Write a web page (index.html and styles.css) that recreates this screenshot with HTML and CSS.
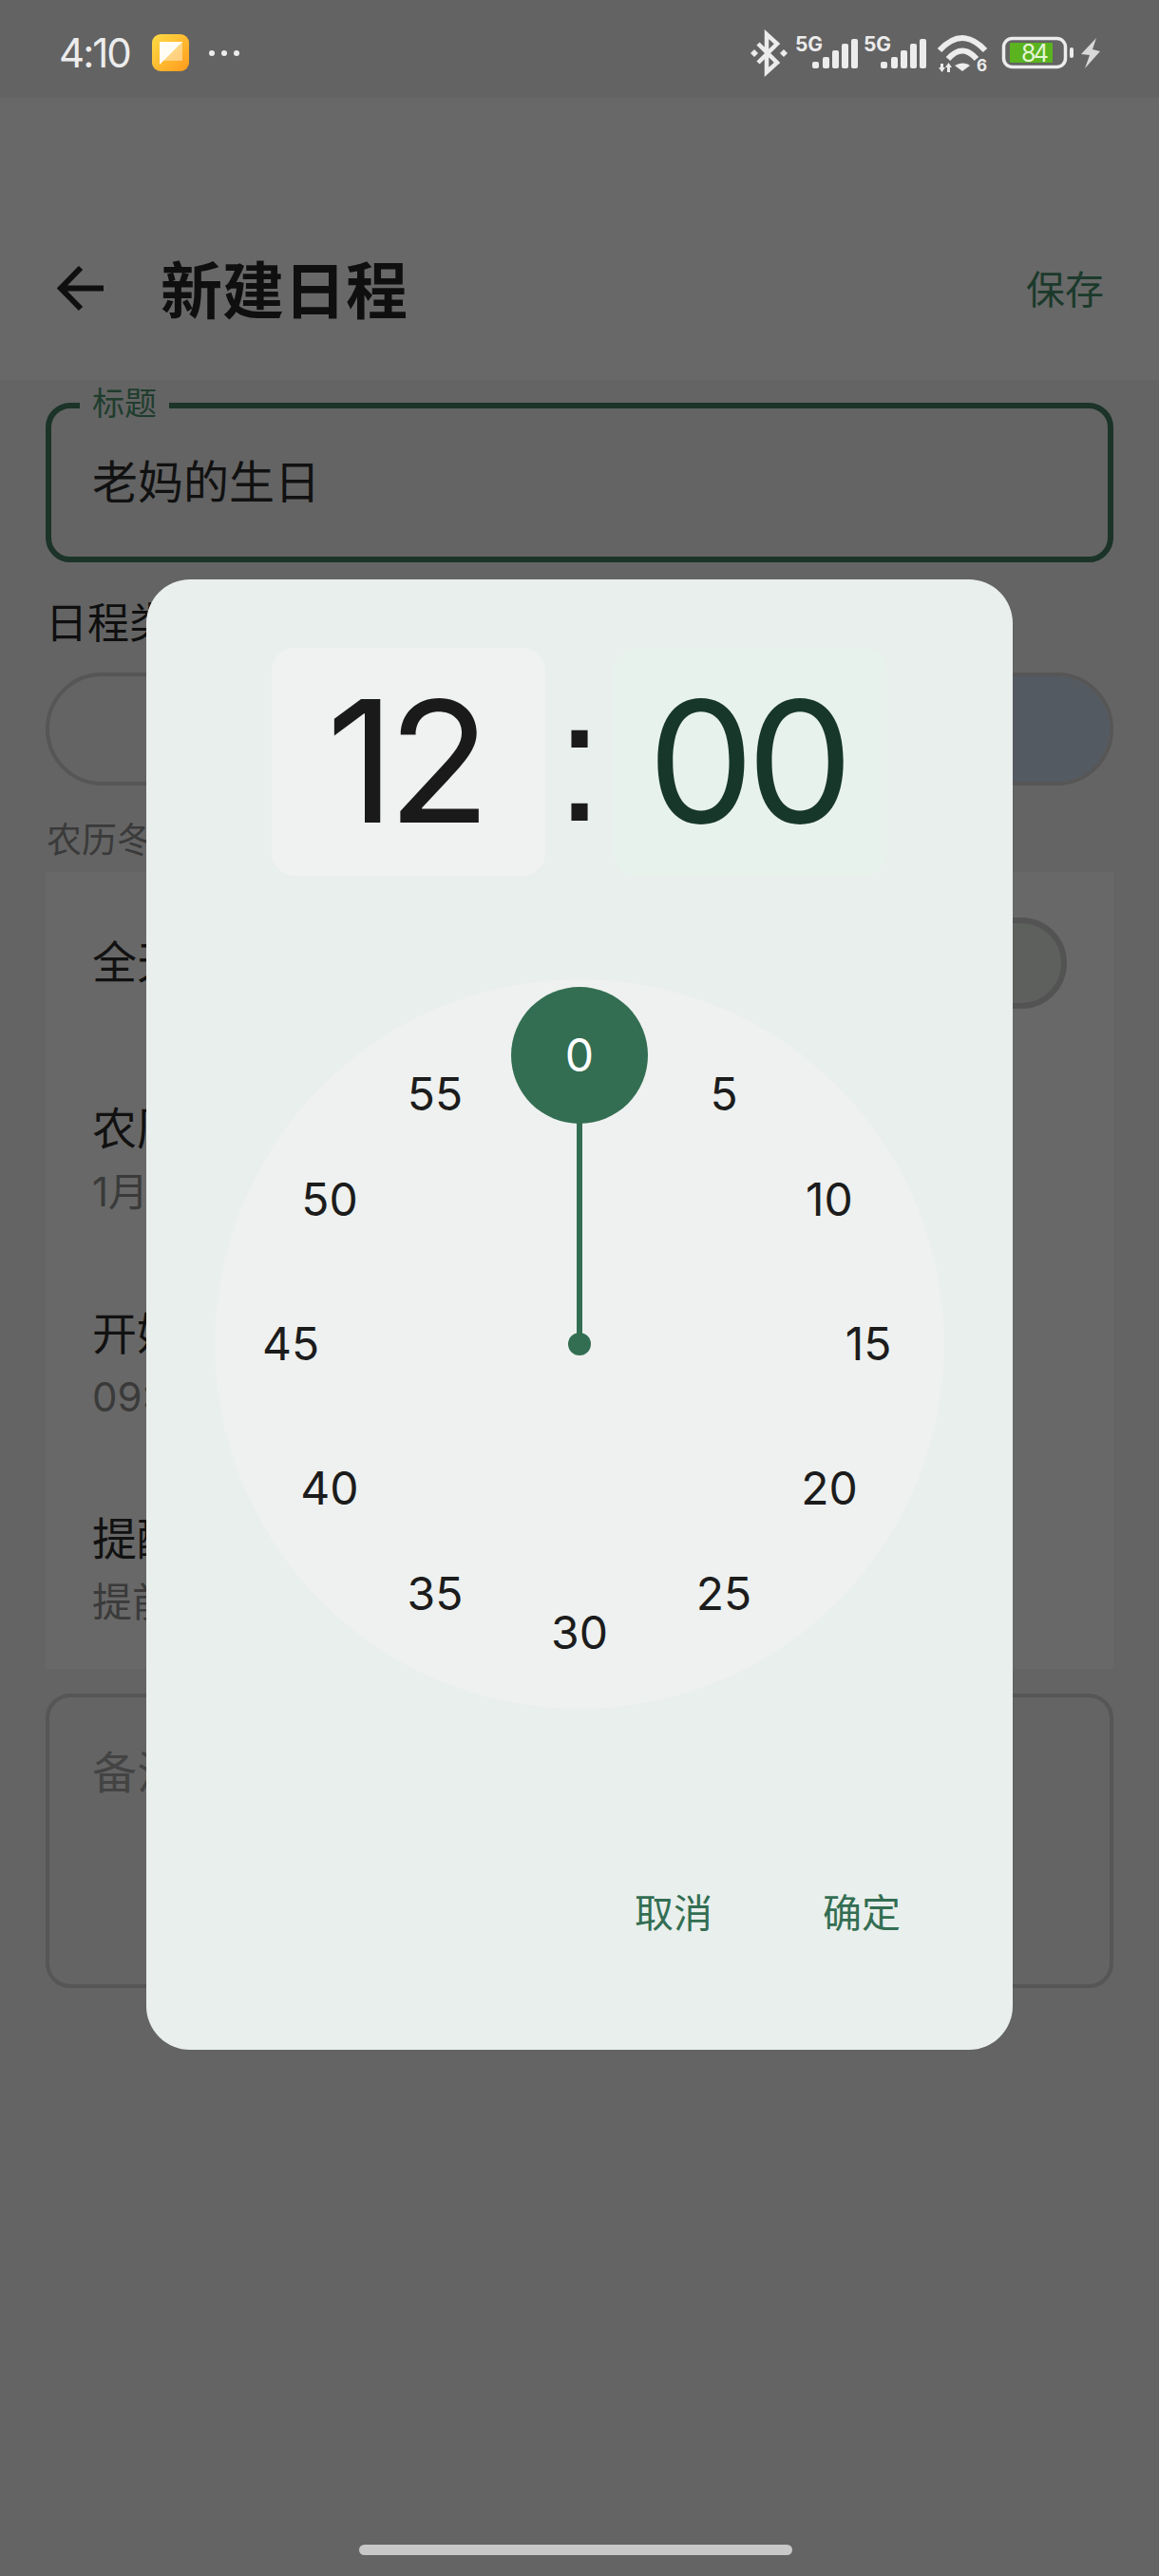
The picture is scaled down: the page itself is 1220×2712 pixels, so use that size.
FILE: index.html
```html
<!DOCTYPE html>
<html>
<head>
	<title>新建日程</title>
	<link rel="stylesheet" href="styles.css">
</head>
<body>
<div class="screen">
	<div class="status">
		<span class="clock_text">4:10</span>
		<svg class="note_icon" width="39" height="39" viewBox="0 0 39 39">
			<defs>
				<linearGradient id="note_grad" x1="0" y1="0" x2="1" y2="1">
					<stop offset="0" stop-color="#ffdc46"/>
					<stop offset="1" stop-color="#ff9a1c"/>
				</linearGradient>
			</defs>
			<rect width="39" height="39" rx="9" fill="url(#note_grad)"/>
			<rect x="8" y="8" width="24" height="20" fill="#fff" opacity="0.4"/>
			<polygon points="8,8 32,8 8,32" fill="#fffdf5"/>
		</svg>
		<span class="more_dots"><i></i><i></i><i></i></span>
		<svg class="status_icons" width="480" height="110" viewBox="740 0 480 110">
			<!-- bluetooth -->
			<path d="M798 46 L818 66 L807 76 V36 L818 46 L798 66" fill="none" stroke="#ececec" stroke-width="4.5"/>
			<polygon points="794,52 798,56 794,60 790,56" fill="#ececec"/>
			<polygon points="825,52 829,56 825,60 821,56" fill="#ececec"/>
			<!-- sim 1 -->
			<text x="837" y="54" class="icon_text" font-size="21" textLength="29">5G</text>
			<g fill="#ececec">
				<rect x="855" y="65" width="7" height="7" rx="2"/>
				<rect x="866" y="60" width="7" height="12" rx="2"/>
				<rect x="876" y="53" width="7" height="19" rx="2"/>
				<rect x="886" y="46" width="7" height="26" rx="2"/>
				<rect x="896" y="41" width="7" height="31" rx="2"/>
			</g>
			<!-- sim 2 -->
			<text x="909" y="54" class="icon_text" font-size="21" textLength="29">5G</text>
			<g fill="#ececec">
				<rect x="927" y="65" width="7" height="7" rx="2"/>
				<rect x="938" y="60" width="7" height="12" rx="2"/>
				<rect x="948" y="53" width="7" height="19" rx="2"/>
				<rect x="958" y="46" width="7" height="26" rx="2"/>
				<rect x="968" y="41" width="7" height="31" rx="2"/>
			</g>
			<!-- wifi -->
			<path d="M989 53 Q1013 27 1037 53" fill="none" stroke="#ececec" stroke-width="6"/>
			<path d="M998 62 Q1013 45 1028 62" fill="none" stroke="#ececec" stroke-width="6"/>
			<path d="M1005 69 Q1013 64 1021 69 L1013 75 Z" fill="#ececec"/>
			<polygon points="990,67 993,67 993,71 995,71 991.5,76 988,71 990,71" fill="#ececec"/>
			<polygon points="997,76 1000,76 1000,71 1002,71 998.5,66 995,71 997,71" fill="#ececec"/>
			<text x="1028" y="75" class="icon_text" font-size="17">6</text>
			<!-- battery -->
			<rect x="1056.5" y="40.5" width="65" height="30" rx="9" fill="none" stroke="#ececec" stroke-width="3.5"/>
			<rect x="1063" y="45" width="45" height="21" rx="1" fill="#5ab31f"/>
			<text x="1075" y="64.5" class="battery_text" font-size="25" textLength="29">84</text>
			<rect x="1126" y="50" width="4" height="11" rx="2" fill="#ececec"/>
			<polygon points="1154,40 1138,57 1147,58 1142,72 1158,54 1150,52" fill="#d8d8d8"/>
		</svg>
	</div>

	<div class="appbar">
		<svg class="back" width="50" height="48" viewBox="0 0 50 48">
			<path d="M25 2 L4 23.5 L25 45 M4 23.5 H49" fill="none" stroke="#0f0f0f" stroke-width="6"/>
		</svg>
		<h1 class="page_title">新建日程</h1>
		<span class="save_btn">保存</span>
	</div>

	<div class="content">
		<div class="title_field">
			<span class="field_label">标题</span>
			<span class="field_value">老妈的生日</span>
		</div>

		<div class="type_label">日程类型</div>
		<div class="segments">
			<div class="seg"></div>
			<div class="seg seg_on"></div>
		</div>
		<div class="hint">农历冬月十五</div>

		<div class="card">
			<div class="row row_first">
				<div class="row_title">全天</div>
				<span class="toggle"></span>
			</div>
			<div class="row">
				<div class="row_title">农历日期</div>
				<div class="row_sub">1月1日</div>
			</div>
			<div class="row">
				<div class="row_title">开始</div>
				<div class="row_sub">09:00</div>
			</div>
			<div class="row">
				<div class="row_title">提醒</div>
				<div class="row_sub">提前1天</div>
			</div>
		</div>

		<div class="note_field">备注</div>
	</div>

	<div class="home_bar"></div>

	<div class="dialog">
		<div class="time_row">
			<div class="time_box hour_box">12</div>
			<div class="colon">:</div>
			<div class="time_box min_box">00</div>
		</div>

		<div class="dial">
			<div class="hand"></div>
			<div class="pivot"></div>
			<div class="picked"></div>
			<span class="num num_on m0">0</span>
			<span class="num m5">5</span>
			<span class="num m10">10</span>
			<span class="num m15">15</span>
			<span class="num m20">20</span>
			<span class="num m25">25</span>
			<span class="num m30">30</span>
			<span class="num m35">35</span>
			<span class="num m40">40</span>
			<span class="num m45">45</span>
			<span class="num m50">50</span>
			<span class="num m55">55</span>
		</div>

		<div class="actions">
			<span>取消</span>
			<span>确定</span>
		</div>
	</div>
</div>
</body>
</html>
```

FILE: styles.css
```css
* {
	box-sizing: border-box;
}

body {
	margin: 0;
	font-family: Inter, "Noto Sans CJK SC", sans-serif;
}

.screen {
	position: relative;
	width: 1220px;
	height: 2712px;
	overflow: hidden;
	background-color: #646464;
}

/* status bar */
.status {
	position: relative;
	height: 103px;
	padding: 8px 0 0 62px;
	display: flex;
	align-items: center;
	background-color: #636363;
}
.clock_text {
	font-size: 42px;
	letter-spacing: -2px;
	color: #ececec;
}
.note_icon {
	margin: -1px 0 0 23px;
}
.more_dots {
	display: flex;
	gap: 7px;
	margin-left: 21px;
}
.more_dots i {
	width: 6px;
	height: 6px;
	border-radius: 50%;
	background-color: #ececec;
}
.status_icons {
	position: absolute;
	top: 0;
	right: 0;
}
.icon_text {
	font-family: Inter, sans-serif;
	font-weight: 700;
	fill: #ececec;
}
.battery_text {
	font-family: Inter, sans-serif;
	fill: #e6f5d6;
}

/* app bar */
.appbar {
	height: 297px;
	padding: 105px 58px 0 60px;
	display: flex;
	align-items: center;
	background-color: #686868;
}
.back {
	flex: none;
}
.page_title {
	margin: 0 0 4px 59px;
	font-size: 65px;
	font-weight: 700;
	color: #0f0f0f;
}
.save_btn {
	margin: 0 0 4px auto;
	font-size: 41px;
	color: #1c3a2b;
}

/* form behind the dialog */
.content {
	padding: 24px 48px 0 48px;
}
.title_field {
	position: relative;
	height: 168px;
	padding: 46px 0 0 43px;
	border: 6px solid #1b3328;
	border-radius: 26px;
}
.field_label {
	position: absolute;
	left: 30px;
	top: -30px;
	padding: 0 13px;
	font-size: 34px;
	line-height: 50px;
	color: #1f3d2e;
	background-color: #646464;
}
.field_value {
	font-size: 48px;
	line-height: 64px;
	color: #111;
}
.type_label {
	margin: 34px 0 22px 0;
	font-size: 44px;
	line-height: 60px;
	color: #0f0f0f;
}
.segments {
	display: flex;
	height: 119px;
	border: 4px solid #565656;
	border-radius: 60px;
	overflow: hidden;
}
.seg {
	flex: 1;
}
.seg_on {
	background-color: #545a62;
}
.hint {
	margin: 33px 0 8px 1px;
	font-size: 37px;
	line-height: 50px;
	color: #3a3a3a;
}
.card {
	height: 839px;
	background-color: #686868;
}
.row {
	height: 216px;
	padding: 43px 0 0 49px;
}
.row_first {
	height: 194px;
	padding-top: 62px;
	padding-right: 49px;
	display: flex;
	justify-content: space-between;
	align-items: flex-start;
}
.row_title {
	font-size: 47px;
	line-height: 66px;
	color: #111;
}
.row_sub {
	font-size: 42px;
	line-height: 68px;
	color: #3a3a3a;
}
.toggle {
	width: 170px;
	height: 96px;
	margin-top: -14px;
	border: 6px solid #535353;
	border-radius: 48px;
	background-color: #5e605e;
}
.note_field {
	height: 310px;
	margin-top: 26px;
	padding: 47px 0 0 45px;
	border: 4px solid #565656;
	border-radius: 26px;
	font-size: 47px;
	line-height: 64px;
	color: #434343;
}

.home_bar {
	position: absolute;
	left: 378px;
	top: 2679px;
	width: 456px;
	height: 11px;
	border-radius: 6px;
	background-color: #c8c8c8;
}

/* time picker dialog */
.dialog {
	position: absolute;
	left: 154px;
	top: 610px;
	width: 912px;
	height: 1548px;
	padding-top: 72px;
	border-radius: 46px;
	background-color: #e9efec;
}
.time_row {
	display: flex;
	justify-content: center;
}
.time_box {
	width: 288px;
	height: 240px;
	padding-right: 8px;
	border-radius: 24px;
	text-align: center;
	font-size: 178px;
	letter-spacing: -8px;
	line-height: 240px;
}
.hour_box {
	background-color: #eff2f0;
	color: #1a1a1a;
}
.min_box {
	background-color: #e8f2ec;
	color: #17372a;
}
.colon {
	width: 72px;
	text-align: center;
	font-family: "Liberation Sans", sans-serif;
	font-size: 180px;
	line-height: 240px;
	color: #1a1a1a;
}

.dial {
	position: relative;
	width: 768px;
	height: 768px;
	margin: 109px auto 0 auto;
	border-radius: 50%;
	background-color: #eef1ef;
}
.picked {
	position: absolute;
	left: 312px;
	top: 8px;
	width: 144px;
	height: 144px;
	border-radius: 50%;
	background-color: #336e53;
}
.hand {
	position: absolute;
	left: 381px;
	top: 150px;
	width: 6px;
	height: 234px;
	background-color: #336e53;
}
.pivot {
	position: absolute;
	left: 372px;
	top: 372px;
	width: 24px;
	height: 24px;
	border-radius: 50%;
	background-color: #336e53;
}
.num {
	position: absolute;
	transform: translate(-50%, -50%);
	font-size: 48px;
	line-height: 60px;
	color: #1c1c1c;
}
.num_on {
	color: #fff;
}
.m0 { left: 384px; top: 80px; }
.m5 { left: 536px; top: 121px; }
.m10 { left: 647px; top: 232px; }
.m15 { left: 688px; top: 384px; }
.m20 { left: 647px; top: 536px; }
.m25 { left: 536px; top: 647px; }
.m30 { left: 384px; top: 688px; }
.m35 { left: 232px; top: 647px; }
.m40 { left: 121px; top: 536px; }
.m45 { left: 80px; top: 384px; }
.m50 { left: 121px; top: 232px; }
.m55 { left: 232px; top: 121px; }

.actions {
	display: flex;
	justify-content: flex-end;
	gap: 116px;
	margin-top: 187px;
	padding-right: 118px;
	font-size: 41px;
	line-height: 56px;
	color: #336e53;
}
```
